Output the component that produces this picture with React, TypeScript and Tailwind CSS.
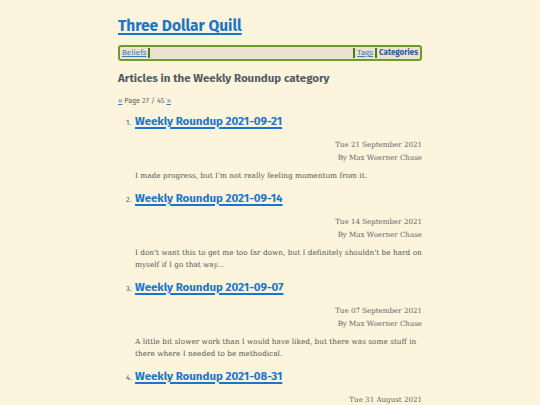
const POSTS = [
  {
    n: 1,
    title: "Weekly Roundup 2021-09-21",
    date: "Tue 21 September 2021",
    excerpt: "I made progress, but I'm not really feeling momentum from it.",
  },
  {
    n: 2,
    title: "Weekly Roundup 2021-09-14",
    date: "Tue 14 September 2021",
    excerpt:
      "I don't want this to get me too far down, but I definitely shouldn't be hard on myself if I go that way...",
  },
  {
    n: 3,
    title: "Weekly Roundup 2021-09-07",
    date: "Tue 07 September 2021",
    excerpt:
      "A little bit slower work than I would have liked, but there was some stuff in there where I needed to be methodical.",
  },
  {
    n: 4,
    title: "Weekly Roundup 2021-08-31",
    date: "Tue 31 August 2021",
    excerpt: "",
  },
];

const sans = "font-['Fira_Sans','Lato','Open_Sans',sans-serif]";
const serif = "font-['DejaVu_Serif',serif]";

export default function App() {
  return (
    <div className="min-h-[405px] w-full bg-[#fcf4dc] text-[#555]">
      <div className="mx-auto w-[304px] pt-[15px]">
        <h1 className={`${sans} text-[15.5px] font-bold leading-[22px]`}>
          <a href="#" className="text-[#1a76cc] underline decoration-[1.5px] underline-offset-[2px]">
            Three Dollar Quill
          </a>
        </h1>

        <nav
          className={`${sans} mt-[8px] flex h-[16px] items-center rounded-[3px] border-2 border-[#6c9c2c] bg-[#ebe3cf] px-[2px] text-[8px] leading-none`}
        >
          <a href="#" className="text-[#3a78b8] underline">Beliefs</a>
          <span className="ml-[1px] h-[10px] w-[2px] bg-[#4c7c1c]" />
          <span className="flex-1" />
          <span className="h-[10px] w-[2px] bg-[#4c7c1c]" />
          <a href="#" className="ml-[2px] text-[#3a78b8] underline">Tags</a>
          <span className="ml-[2px] h-[10px] w-[2px] bg-[#4c7c1c]" />
          <a href="#" className="ml-[2px] font-bold text-[#2a5c98]">Categories</a>
        </nav>

        <h2 className={`${sans} mt-[9px] text-[11.5px] font-bold leading-[16px] text-[#535c63]`}>
          Articles in the Weekly Roundup category
        </h2>

        <p className={`${sans} mt-[10px] text-[7.5px] leading-[10px] text-[#666]`}>
          <a href="#" className="text-[#3a78b8] underline">«</a> Page 27 / 45{" "}
          <a href="#" className="text-[#3a78b8] underline">»</a>
        </p>

        <ol className="mt-[7px] pl-[17px]">
          {POSTS.map((p) => (
            <li key={p.n} className="mb-[8px]">
              <div className="flex items-baseline">
                <span className={`${sans} -ml-[9px] w-[9px] text-[7.5px] text-[#555]`}>{p.n}.</span>
                <a
                  href="#"
                  className={`${sans} text-[11.5px] font-bold leading-[16px] text-[#1a76cc] underline decoration-[1.5px] underline-offset-[2px]`}
                >
                  {p.title}
                </a>
              </div>
              <div className={`${serif} mt-[10px] text-right text-[7.1px] leading-[12.5px] text-[#666]`}>
                <div>{p.date}</div>
                <div>By Max Woerner Chase</div>
              </div>
              {p.excerpt && (
                <p className={`${serif} mt-[6px] text-[7.35px] leading-[12px] text-[#555]`}>
                  {p.excerpt}
                </p>
              )}
            </li>
          ))}
        </ol>
      </div>
    </div>
  );
}
